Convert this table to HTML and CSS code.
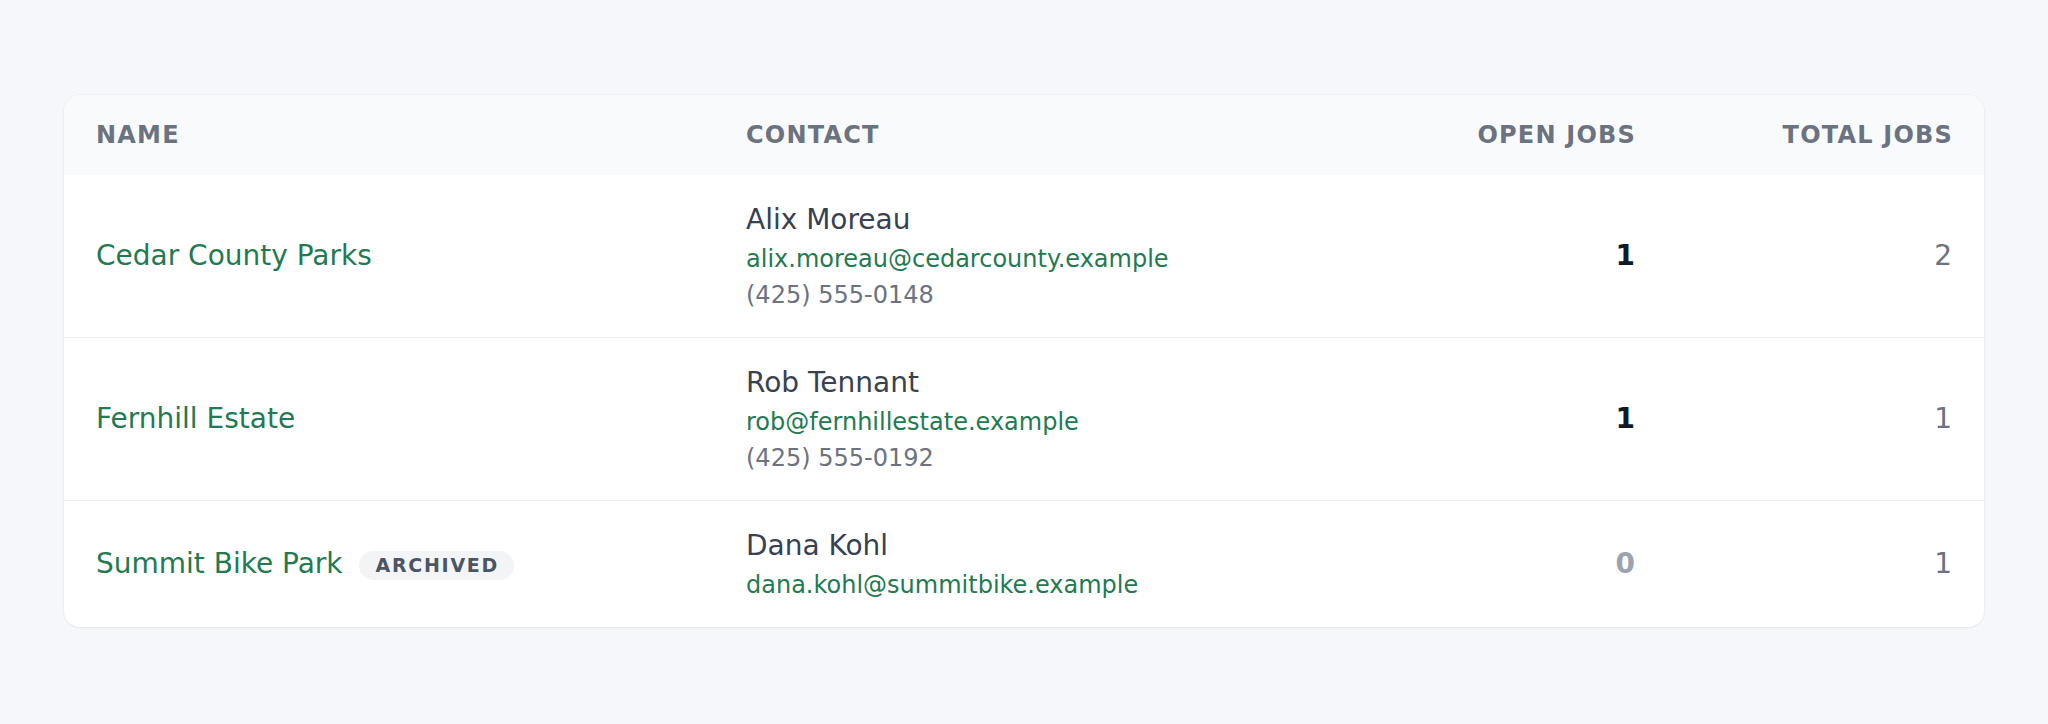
FILE: index.html
```html
<!DOCTYPE html>
<html lang="en">
<head>
<meta charset="utf-8">
<title>Clients</title>
<link rel="stylesheet" href="styles.css">
</head>
<body>
<main class="page">
  <section class="card">
    <table class="clients">
      <colgroup>
        <col class="col-name">
        <col class="col-contact">
        <col class="col-open">
        <col class="col-total">
      </colgroup>
      <thead>
        <tr>
          <th class="th">Name</th>
          <th class="th">Contact</th>
          <th class="th num">Open jobs</th>
          <th class="th num">Total jobs</th>
        </tr>
      </thead>
      <tbody>
        <tr class="row">
          <td class="cell"><a class="client-link" href="#">Cedar County Parks</a></td>
          <td class="cell">
            <div class="contact-name">Alix Moreau</div>
            <a class="contact-email" href="#">alix.moreau@cedarcounty.example</a>
            <div class="contact-phone">(425) 555-0148</div>
          </td>
          <td class="cell num"><span class="open">1</span></td>
          <td class="cell num"><span class="total">2</span></td>
        </tr>
        <tr class="row">
          <td class="cell"><a class="client-link" href="#">Fernhill Estate</a></td>
          <td class="cell">
            <div class="contact-name">Rob Tennant</div>
            <a class="contact-email" href="#">rob@fernhillestate.example</a>
            <div class="contact-phone">(425) 555-0192</div>
          </td>
          <td class="cell num"><span class="open">1</span></td>
          <td class="cell num"><span class="total">1</span></td>
        </tr>
        <tr class="row">
          <td class="cell">
            <span class="name-wrap">
              <a class="client-link" href="#">Summit Bike Park</a>
              <span class="badge">Archived</span>
            </span>
          </td>
          <td class="cell">
            <div class="contact-name">Dana Kohl</div>
            <a class="contact-email" href="#">dana.kohl@summitbike.example</a>
          </td>
          <td class="cell num"><span class="open zero">0</span></td>
          <td class="cell num"><span class="total">1</span></td>
        </tr>
      </tbody>
    </table>
  </section>
</main>
</body>
</html>
```

FILE: styles.css
```css
* {
  box-sizing: border-box;
}

html, body {
  margin: 0;
  padding: 0;
  background: #f6f7fa;
}

body {
  font-family: "DejaVu Sans", "Liberation Sans", sans-serif;
  color: #374151;
}

.page {
  padding: 95px 64px 96px;
}

.card {
  background: #ffffff;
  border-radius: 16px;
  overflow: hidden;
  box-shadow: 0 1px 3px rgba(15, 23, 42, 0.06), 0 0 0 1px rgba(15, 23, 42, 0.025);
}

.clients {
  width: 100%;
  border-collapse: collapse;
  table-layout: fixed;
}

.col-name { width: 650px; }
.col-open { width: 240px; }
.col-total { width: 317px; }

.th {
  background: #f9fafb;
  padding: 24px 32px;
  line-height: 32px;
  font-size: 24px;
  font-weight: 700;
  letter-spacing: 0.05em;
  text-transform: uppercase;
  color: #6b7280;
  text-align: left;
}

.th.num {
  text-align: right;
  padding-right: 31px;
}

.row + .row {
  border-top: 1px solid #eceef1;
}

.cell {
  padding: 24px 32px;
  vertical-align: middle;
  font-size: 28px;
  line-height: 40px;
}

.cell.num {
  text-align: right;
}

.client-link {
  color: #237a50;
  text-decoration: none;
  font-size: 28px;
}

.name-wrap {
  display: inline-flex;
  align-items: center;
  gap: 16px;
}

.badge {
  display: inline-block;
  background: #f3f4f6;
  color: #4b5563;
  font-size: 19px;
  font-weight: 700;
  letter-spacing: 0.09em;
  text-transform: uppercase;
  line-height: 21px;
  padding: 4px 15px 4px 17px;
  border-radius: 999px;
  margin-top: 2px;
}

.contact-name {
  font-size: 28px;
  line-height: 42px;
  color: #374151;
}

.contact-email {
  display: block;
  font-size: 24px;
  line-height: 36px;
  color: #237a50;
  text-decoration: none;
}

.contact-phone {
  font-size: 24px;
  line-height: 36px;
  color: #6b7280;
}

.open {
  font-weight: 700;
  color: #111827;
}

.open.zero {
  color: #9ca3af;
}

.total {
  color: #6b7280;
}
```
